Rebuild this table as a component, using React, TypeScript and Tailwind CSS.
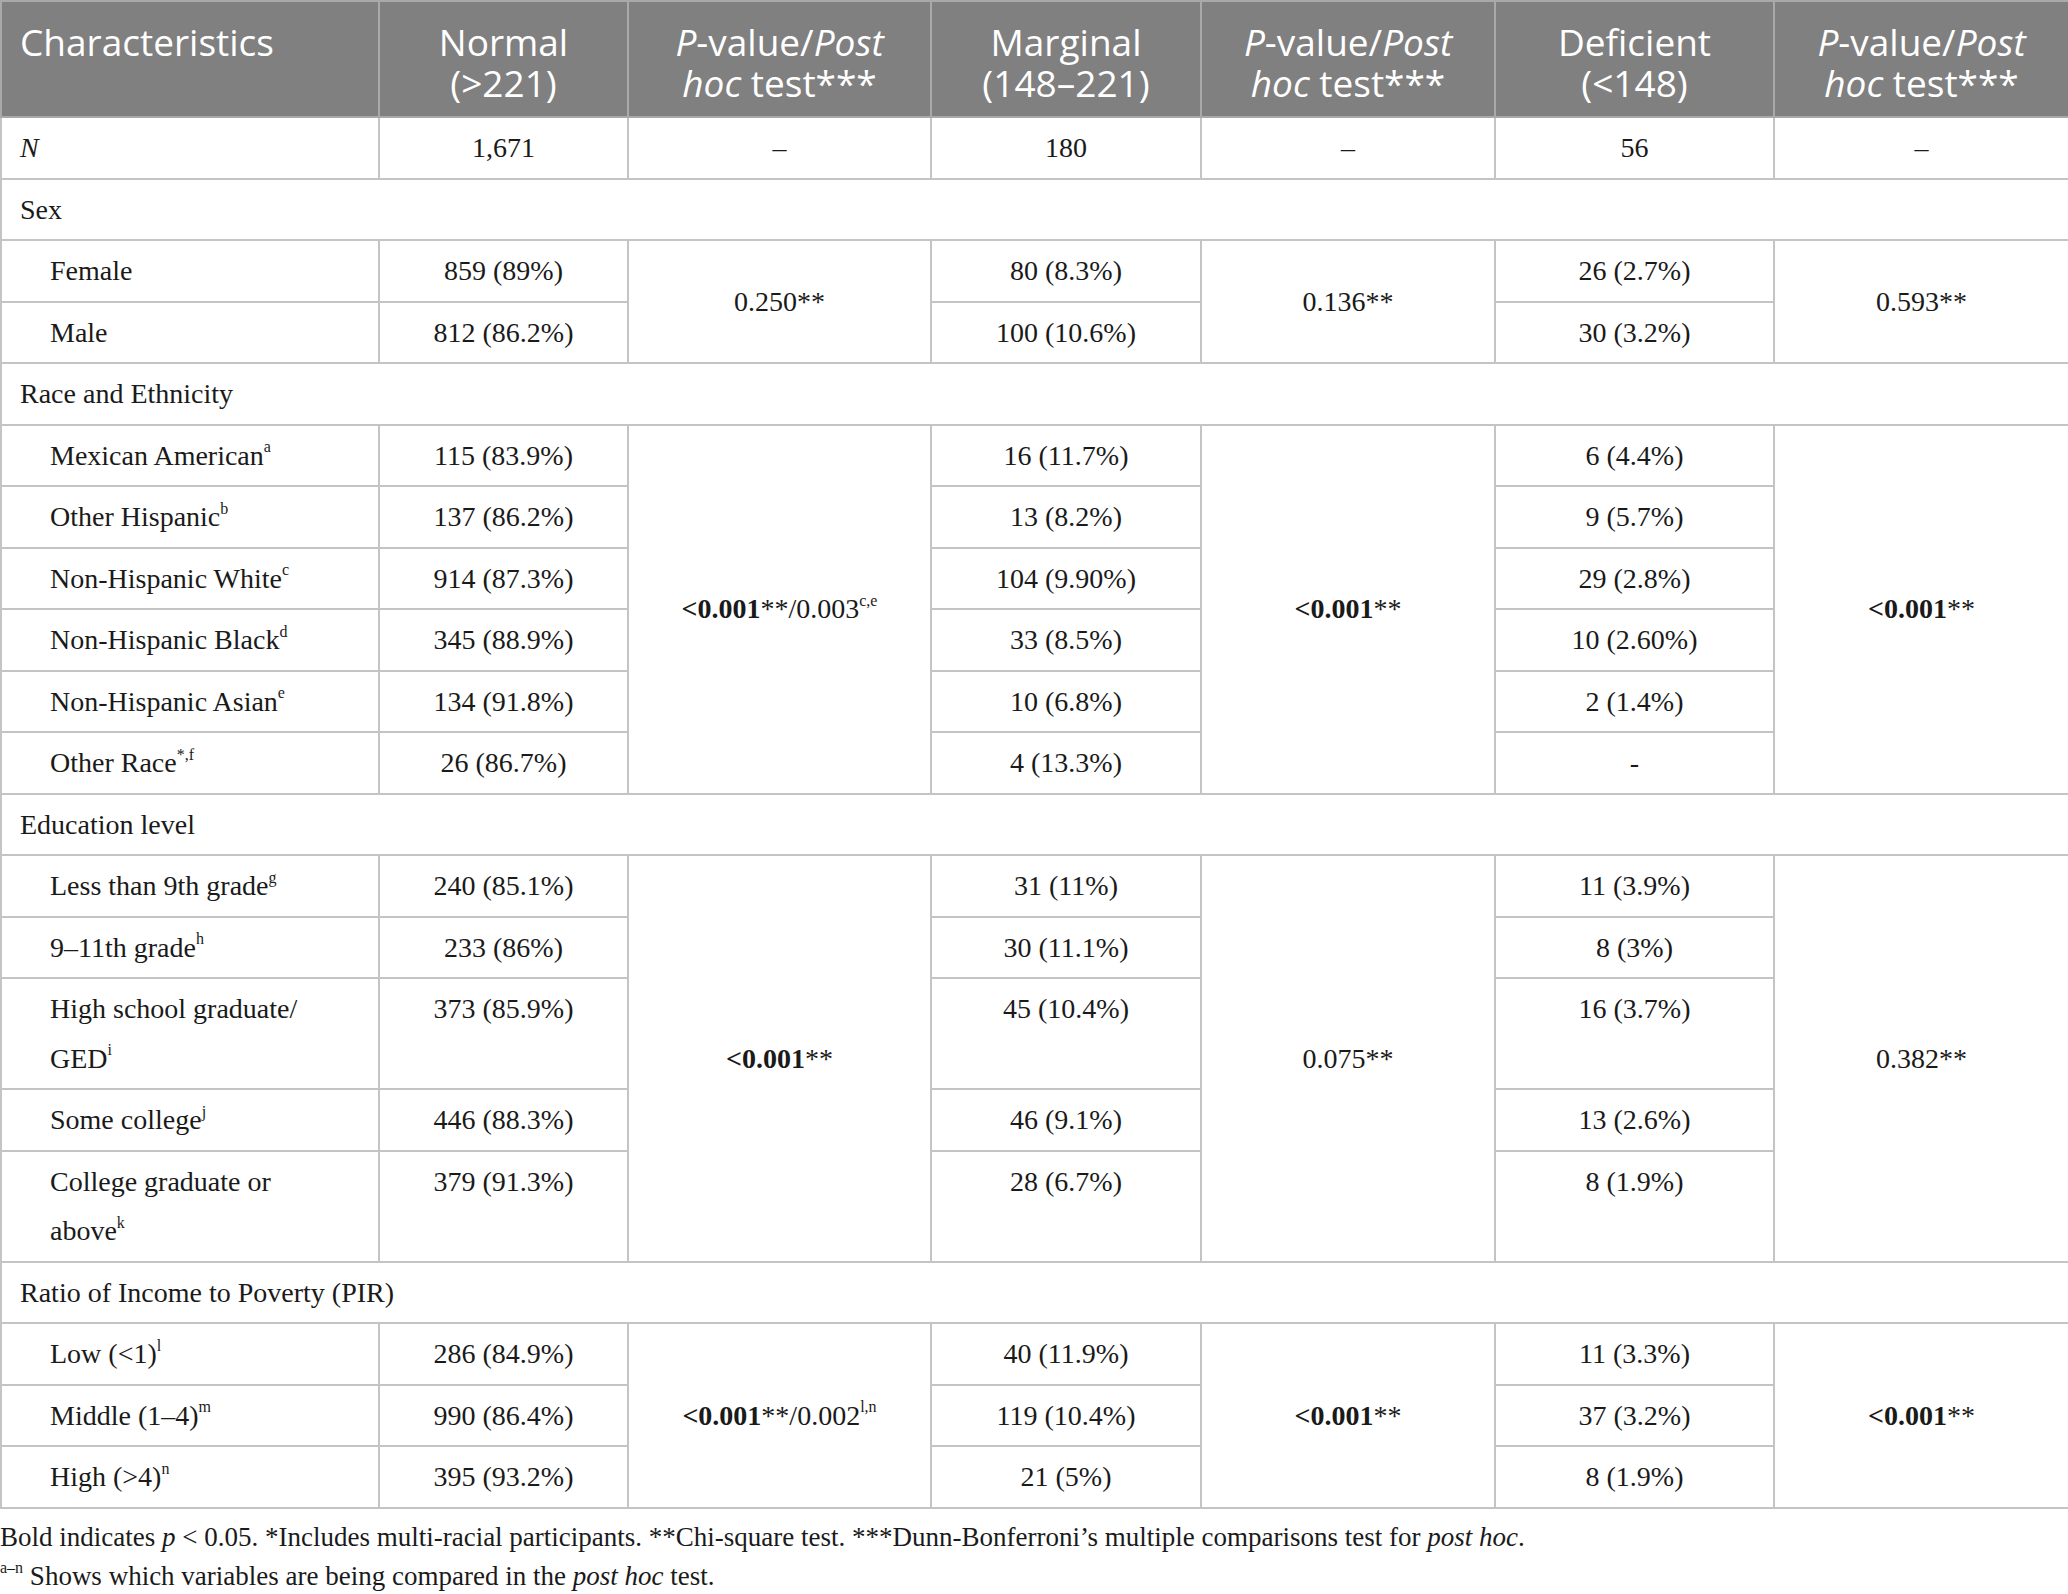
import React from 'react';

type Row =
    | { kind: 'section'; label: string }
    | {
          kind: 'data';
          label: React.ReactNode;
          sup?: string;
          normal: string;
          marginal: string;
          deficient: string;
          p?: [React.ReactNode, React.ReactNode, React.ReactNode];
          span?: number;
      };

const Sup = ({ children }: { children: React.ReactNode }) => (
    <sup className="text-[16px] relative -top-[2px] align-super leading-none">{children}</sup>
);

const Sig = ({ extra }: { extra?: React.ReactNode }) => (
    <>
        <b className="font-bold">&lt;0.001</b>**{extra}
    </>
);

const rows: Row[] = [
    { kind: 'section', label: 'Sex' },
    { kind: 'data', label: 'Female', normal: '859 (89%)', marginal: '80 (8.3%)', deficient: '26 (2.7%)', p: ['0.250**', '0.136**', '0.593**'], span: 2 },
    { kind: 'data', label: 'Male', normal: '812 (86.2%)', marginal: '100 (10.6%)', deficient: '30 (3.2%)' },
    { kind: 'section', label: 'Race and Ethnicity' },
    {
        kind: 'data', label: 'Mexican American', sup: 'a', normal: '115 (83.9%)', marginal: '16 (11.7%)', deficient: '6 (4.4%)',
        p: [<Sig extra={<>/0.003<Sup>c,e</Sup></>} />, <Sig />, <Sig />], span: 6,
    },
    { kind: 'data', label: 'Other Hispanic', sup: 'b', normal: '137 (86.2%)', marginal: '13 (8.2%)', deficient: '9 (5.7%)' },
    { kind: 'data', label: 'Non-Hispanic White', sup: 'c', normal: '914 (87.3%)', marginal: '104 (9.90%)', deficient: '29 (2.8%)' },
    { kind: 'data', label: 'Non-Hispanic Black', sup: 'd', normal: '345 (88.9%)', marginal: '33 (8.5%)', deficient: '10 (2.60%)' },
    { kind: 'data', label: 'Non-Hispanic Asian', sup: 'e', normal: '134 (91.8%)', marginal: '10 (6.8%)', deficient: '2 (1.4%)' },
    { kind: 'data', label: 'Other Race', sup: '*,f', normal: '26 (86.7%)', marginal: '4 (13.3%)', deficient: '-' },
    { kind: 'section', label: 'Education level' },
    { kind: 'data', label: 'Less than 9th grade', sup: 'g', normal: '240 (85.1%)', marginal: '31 (11%)', deficient: '11 (3.9%)', p: [<Sig />, '0.075**', '0.382**'], span: 5 },
    { kind: 'data', label: '9–11th grade', sup: 'h', normal: '233 (86%)', marginal: '30 (11.1%)', deficient: '8 (3%)' },
    { kind: 'data', label: <>High school graduate/<br />GED</>, sup: 'i', normal: '373 (85.9%)', marginal: '45 (10.4%)', deficient: '16 (3.7%)' },
    { kind: 'data', label: 'Some college', sup: 'j', normal: '446 (88.3%)', marginal: '46 (9.1%)', deficient: '13 (2.6%)' },
    { kind: 'data', label: <>College graduate or<br />above</>, sup: 'k', normal: '379 (91.3%)', marginal: '28 (6.7%)', deficient: '8 (1.9%)' },
    { kind: 'section', label: 'Ratio of Income to Poverty (PIR)' },
    {
        kind: 'data', label: 'Low (<1)', sup: 'l', normal: '286 (84.9%)', marginal: '40 (11.9%)', deficient: '11 (3.3%)',
        p: [<Sig extra={<>/0.002<Sup>l,n</Sup></>} />, <Sig />, <Sig />], span: 3,
    },
    { kind: 'data', label: 'Middle (1–4)', sup: 'm', normal: '990 (86.4%)', marginal: '119 (10.4%)', deficient: '37 (3.2%)' },
    { kind: 'data', label: 'High (>4)', sup: 'n', normal: '395 (93.2%)', marginal: '21 (5%)', deficient: '8 (1.9%)' },
];

const PHead = () => (
    <>
        <i>P</i>-value/<i>Post</i>
        <br />
        <i>hoc</i> test***
    </>
);

export default function App() {
    const td = 'border-2 border-[#c4c4c4] px-3 py-[5px] align-top text-center';
    const pd = 'border-2 border-[#c4c4c4] px-3 align-middle text-center';
    const th = 'border-2 border-[#a9a9a9] px-2 pt-[19px] pb-[13px] font-normal text-center align-top';

    return (
        <div className="w-[2068px] min-h-screen bg-white text-[#1a1a1a] font-['Liberation_Serif',serif]">
            <table className="w-[2068px] border-collapse table-fixed text-[28px] leading-[49.5px]">
                <colgroup>
                    <col className="w-[378px]" />
                    <col className="w-[249px]" />
                    <col className="w-[303px]" />
                    <col className="w-[270px]" />
                    <col className="w-[294px]" />
                    <col className="w-[279px]" />
                    <col className="w-[295px]" />
                </colgroup>
                <thead>
                    <tr className="bg-[#808080] text-white font-['Open_Sans',sans-serif] text-[37px] leading-[41px]">
                        <th className={`${th} text-left pl-[18px]`}>Characteristics</th>
                        <th className={th}>Normal<br />(&gt;221)</th>
                        <th className={th}><PHead /></th>
                        <th className={th}>Marginal<br />(148–221)</th>
                        <th className={th}><PHead /></th>
                        <th className={th}>Deficient<br />(&lt;148)</th>
                        <th className={th}><PHead /></th>
                    </tr>
                </thead>
                <tbody>
                    <tr>
                        <td className={`${td} text-left pl-[18px]`}><i>N</i></td>
                        <td className={td}>1,671</td>
                        <td className={td}>–</td>
                        <td className={td}>180</td>
                        <td className={td}>–</td>
                        <td className={td}>56</td>
                        <td className={td}>–</td>
                    </tr>
                    {rows.map((r, i) =>
                        r.kind === 'section' ? (
                            <tr key={i}>
                                <td colSpan={7} className={`${td} text-left pl-[18px]`}>{r.label}</td>
                            </tr>
                        ) : (
                            <tr key={i}>
                                <td className={`${td} text-left pl-[48px]`}>
                                    {r.label}
                                    {r.sup && <Sup>{r.sup}</Sup>}
                                </td>
                                <td className={td}>{r.normal}</td>
                                {r.p && <td rowSpan={r.span} className={pd}>{r.p[0]}</td>}
                                <td className={td}>{r.marginal}</td>
                                {r.p && <td rowSpan={r.span} className={pd}>{r.p[1]}</td>}
                                <td className={td}>{r.deficient}</td>
                                {r.p && <td rowSpan={r.span} className={pd}>{r.p[2]}</td>}
                            </tr>
                        )
                    )}
                </tbody>
            </table>
            <div className="pt-[9px] text-[27px] leading-[39px]">
                <p>
                    Bold indicates <i>p</i> &lt; 0.05. *Includes multi-racial participants. **Chi-square test. ***Dunn-Bonferroni’s multiple comparisons test for <i>post hoc</i>.
                </p>
                <p>
                    <Sup>a–n</Sup> Shows which variables are being compared in the <i>post hoc</i> test.
                </p>
            </div>
        </div>
    );
}
